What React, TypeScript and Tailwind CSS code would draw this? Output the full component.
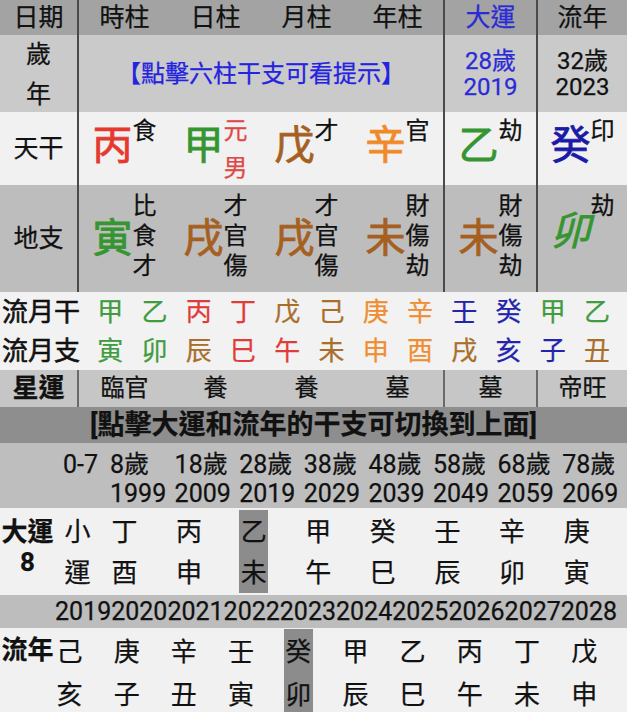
import React from "react";

const GREEN = "text-[#359530]";
const RED = "text-[#e5392f]";
const BROWN = "text-[#a5601f]";
const ORANGE = "text-[#f08a28]";
const BLUE = "text-[#1a1aa6]";

function StemGroup({ ch, cls, subs, subCls }: { ch: string; cls: string; subs: string[]; subCls?: string }) {
  return (
    <div className="flex items-start">
      <span className={`mt-[13px] w-[40px] text-center text-[40px] leading-[40px] [-webkit-text-stroke:0.8px] ${cls}`}>{ch}</span>
      <div className={`flex w-[24px] flex-col text-[24px] leading-[37px] ${subCls ?? "text-[#111]"}`}>
        {subs.map((s, i) => (
          <span key={i}>{s}</span>
        ))}
      </div>
    </div>
  );
}

function BranchGroup({ ch, cls, subs, mt }: { ch: string; cls: string; subs: string[]; mt: string }) {
  return (
    <div className="flex items-start">
      <span className={`w-[40px] text-center text-[40px] leading-[40px] [-webkit-text-stroke:0.8px] ${mt} ${cls}`}>{ch}</span>
      <div className="flex w-[24px] flex-col text-[24px] leading-[30px] text-[#111]">
        {subs.map((s, i) => (
          <span key={i}>{s}</span>
        ))}
      </div>
    </div>
  );
}

const MG = "text-[#3f9c3f]";
const MR = "text-[#e03a3a]";
const MB = "text-[#a86e2c]";
const MO = "text-[#ee8e30]";
const MU = "text-[#2424aa]";

const monthGan: [string, string][] = [
  ["甲", MG], ["乙", MG], ["丙", MR], ["丁", MR], ["戊", MB], ["己", MB],
  ["庚", MO], ["辛", MO], ["壬", MU], ["癸", MU], ["甲", MG], ["乙", MG],
];
const monthZhi: [string, string][] = [
  ["寅", MG], ["卯", MG], ["辰", MB], ["巳", MR], ["午", MR], ["未", MB],
  ["申", MO], ["酉", MO], ["戌", MB], ["亥", MU], ["子", MU], ["丑", MB],
];

const dayun = [
  { age: "8歲", year: "1999", g: "丁", z: "酉" },
  { age: "18歲", year: "2009", g: "丙", z: "申" },
  { age: "28歲", year: "2019", g: "乙", z: "未", hl: true },
  { age: "38歲", year: "2029", g: "甲", z: "午" },
  { age: "48歲", year: "2039", g: "癸", z: "巳" },
  { age: "58歲", year: "2049", g: "壬", z: "辰" },
  { age: "68歲", year: "2059", g: "辛", z: "卯" },
  { age: "78歲", year: "2069", g: "庚", z: "寅" },
];

const liunian = [
  { y: "2019", g: "己", z: "亥" },
  { y: "2020", g: "庚", z: "子" },
  { y: "2021", g: "辛", z: "丑" },
  { y: "2022", g: "壬", z: "寅" },
  { y: "2023", g: "癸", z: "卯", hl: true },
  { y: "2024", g: "甲", z: "辰" },
  { y: "2025", g: "乙", z: "巳" },
  { y: "2026", g: "丙", z: "午" },
  { y: "2027", g: "丁", z: "未" },
  { y: "2028", g: "戊", z: "申" },
];

export default function App() {
  return (
    <div className="h-[712px] w-[627px] overflow-hidden bg-[#f1f1f1] font-[family-name:Roboto,'Noto_Sans_CJK_TC',sans-serif] text-[#111] [-webkit-text-stroke:0.25px]">
      {/* header */}
      <div className="flex h-[35px] bg-[#a3a3a3] text-[25px] leading-[35px]">
        <div className="w-[79px] border-r-2 border-[#4a4a4a] text-center">日期</div>
        <div className="w-[91px] text-center">時柱</div>
        <div className="w-[91px] text-center">日柱</div>
        <div className="w-[91px] text-center">月柱</div>
        <div className="w-[91px] text-center">年柱</div>
        <div className="w-[93px] border-l-2 border-[#4a4a4a] text-center text-[#2a2ad6]">大運</div>
        <div className="w-[91px] border-l-2 border-[#4a4a4a] text-center">流年</div>
      </div>
      {/* age / year */}
      <div className="flex h-[77px] bg-[#cacaca]">
        <div className="flex w-[79px] flex-col items-center justify-center border-r-2 border-[#4a4a4a] pt-[3px] text-[25px] leading-[40px]">
          <span>歲</span>
          <span>年</span>
        </div>
        <div className="flex w-[364px] items-center justify-center text-[24px] text-[#2323e0]">【點擊六柱干支可看提示】</div>
        <div className="flex w-[93px] flex-col items-center justify-center border-l-2 border-[#4a4a4a] text-[24px] leading-[26px] text-[#2a2ad6]">
          <span>28歲</span>
          <span>2019</span>
        </div>
        <div className="flex w-[91px] flex-col items-center justify-center border-l-2 border-[#4a4a4a] text-[24px] leading-[26px]">
          <span>32歲</span>
          <span>2023</span>
        </div>
      </div>
      {/* 天干 */}
      <div className="flex h-[73px] bg-[#f1f1f1]">
        <div className="flex w-[79px] items-center justify-center border-r-2 border-[#4a4a4a] text-[25px]">天干</div>
        <div className="flex w-[91px] justify-center pt-px">
          <StemGroup ch="丙" cls={RED} subs={["食"]} />
        </div>
        <div className="flex w-[91px] justify-center pt-px">
          <StemGroup ch="甲" cls={GREEN} subs={["元", "男"]} subCls="text-[#e04848]" />
        </div>
        <div className="flex w-[91px] justify-center pt-px">
          <StemGroup ch="戊" cls={BROWN} subs={["才"]} />
        </div>
        <div className="flex w-[91px] justify-center pt-px">
          <StemGroup ch="辛" cls={ORANGE} subs={["官"]} />
        </div>
        <div className="flex w-[93px] justify-center border-l-2 border-[#4a4a4a] pt-px">
          <StemGroup ch="乙" cls={GREEN} subs={["劫"]} />
        </div>
        <div className="flex w-[91px] justify-center border-l-2 border-[#4a4a4a] pt-px">
          <StemGroup ch="癸" cls={BLUE} subs={["印"]} />
        </div>
      </div>
      {/* 地支 */}
      <div className="flex h-[107px] bg-[#bdbdbd]">
        <div className="flex w-[79px] items-center justify-center border-r-2 border-[#4a4a4a] text-[25px]">地支</div>
        <div className="flex w-[91px] justify-center pt-[6px]">
          <BranchGroup ch="寅" cls={GREEN} subs={["比", "食", "才"]} mt="mt-[28px]" />
        </div>
        <div className="flex w-[91px] justify-center pt-[6px]">
          <BranchGroup ch="戌" cls={BROWN} subs={["才", "官", "傷"]} mt="mt-[28px]" />
        </div>
        <div className="flex w-[91px] justify-center pt-[6px]">
          <BranchGroup ch="戌" cls={BROWN} subs={["才", "官", "傷"]} mt="mt-[28px]" />
        </div>
        <div className="flex w-[91px] justify-center pt-[6px]">
          <BranchGroup ch="未" cls={BROWN} subs={["財", "傷", "劫"]} mt="mt-[28px]" />
        </div>
        <div className="flex w-[93px] justify-center border-l-2 border-[#4a4a4a] pt-[6px]">
          <BranchGroup ch="未" cls={BROWN} subs={["財", "傷", "劫"]} mt="mt-[28px]" />
        </div>
        <div className="flex w-[91px] justify-center border-l-2 border-[#4a4a4a] pt-[6px]">
          <BranchGroup ch="卯" cls={`${GREEN} italic`} subs={["劫"]} mt="mt-[21px]" />
        </div>
      </div>
      {/* 流月 */}
      <div className="flex h-[40px] items-center bg-[#f2f2f2]">
        <div className="w-[88px] pl-[2px] text-[26px] [-webkit-text-stroke:0.6px]">流月干</div>
        {monthGan.map(([c, cls], i) => (
          <div key={i} className={`w-[44.27px] text-center text-[26px] ${cls}`}>
            {c}
          </div>
        ))}
      </div>
      <div className="flex h-[38px] items-center bg-[#f2f2f2]">
        <div className="w-[88px] pl-[2px] text-[26px] [-webkit-text-stroke:0.6px]">流月支</div>
        {monthZhi.map(([c, cls], i) => (
          <div key={i} className={`w-[44.27px] text-center text-[26px] ${cls}`}>
            {c}
          </div>
        ))}
      </div>
      {/* 星運 */}
      <div className="flex h-[37px] bg-[#c6c6c6] text-[24px] leading-[37px]">
        <div className="w-[79px] border-r-2 border-[#6a6a6a] text-center text-[26px] font-bold">星運</div>
        <div className="w-[91px] text-center">臨官</div>
        <div className="w-[91px] text-center">養</div>
        <div className="w-[91px] text-center">養</div>
        <div className="w-[91px] text-center">墓</div>
        <div className="w-[93px] border-l-2 border-[#6a6a6a] text-center">墓</div>
        <div className="w-[91px] border-l-2 border-[#6a6a6a] text-center">帝旺</div>
      </div>
      {/* banner */}
      <div className="h-[36px] bg-[#8e8e8e] text-center text-[27px] font-bold leading-[36px]">[點擊大運和流年的干支可切換到上面]</div>
      {/* ages */}
      <div className="flex h-[65px] bg-[#bebebe] pt-[7px] text-[25px] leading-[29px]">
        <div className="w-[55px]" />
        <div className="w-[55px] pl-[8px]">0-7</div>
        {dayun.map((d, i) => (
          <div key={i} className="flex w-[64.6px] flex-col whitespace-nowrap">
            <span>{d.age}</span>
            <span>{d.year}</span>
          </div>
        ))}
      </div>
      {/* 大運 */}
      <div className="flex h-[87px] bg-[#f1f1f1] text-[26px]">
        <div className="flex w-[55px] flex-col items-center pt-[9px] text-[26px] font-bold leading-[30px]">
          <span>大運</span>
          <span>8</span>
        </div>
        <div className="flex w-[55px] pl-[8px]">
          <div className="my-[2px] flex w-[29px] flex-col items-center justify-center pt-[3px] leading-[41px]">
            <span>小</span>
            <span>運</span>
          </div>
        </div>
        {dayun.map((d, i) => (
          <div key={i} className="flex w-[64.6px]">
            <div
              className={`my-[2px] flex w-[29px] flex-col items-center justify-center pt-[3px] leading-[41px] ${
                d.hl ? "bg-[#8c8c8c]" : ""
              }`}
            >
              <span>{d.g}</span>
              <span>{d.z}</span>
            </div>
          </div>
        ))}
      </div>
      {/* 流年 years */}
      <div className="flex h-[33px] bg-[#bdbdbd] text-[25px] leading-[33px]">
        <div className="w-[55px] shrink-0" />
        <div className="whitespace-nowrap">{liunian.map((l) => l.y).join("")}</div>
      </div>
      {/* 流年 */}
      <div className="flex h-[90px] bg-[#f1f1f1] text-[26px]">
        <div className="w-[55px] pt-[5px] text-center text-[26px] font-bold leading-[34px]">流年</div>
        {liunian.map((l, i) => (
          <div key={i} className="flex w-[57.2px]">
            <div
              className={`mt-px flex w-[29px] flex-col items-center pt-[2px] leading-[43px] ${
                l.hl ? "bg-[#8c8c8c]" : ""
              }`}
            >
              <span>{l.g}</span>
              <span>{l.z}</span>
            </div>
          </div>
        ))}
      </div>
    </div>
  );
}
